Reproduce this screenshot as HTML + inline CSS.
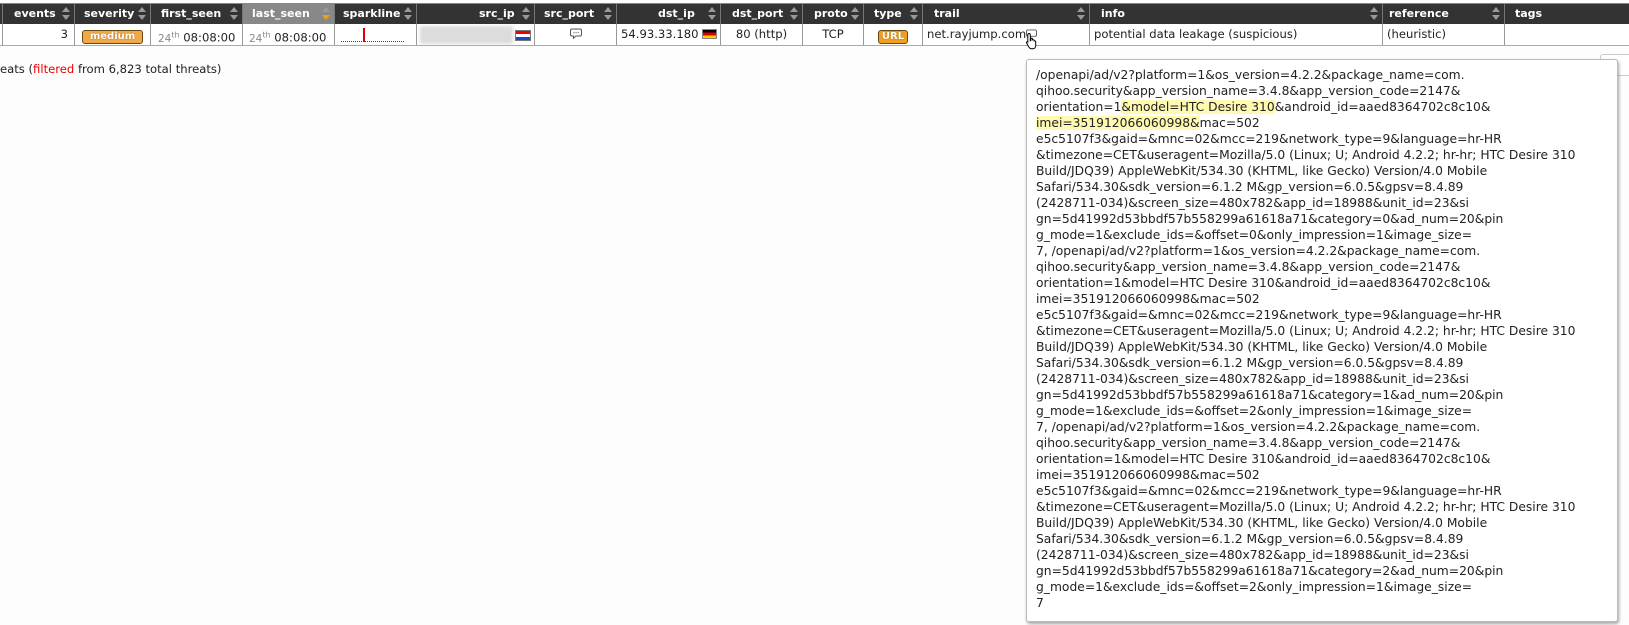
<!DOCTYPE html>
<html><head><meta charset="utf-8"><style>
*{box-sizing:border-box}
body{margin:0;width:1629px;height:625px;background:#fdfdfd;font-family:"DejaVu Sans","Liberation Sans",sans-serif;font-size:11.6px;color:#222;position:relative;overflow:hidden}
.hdr{position:absolute;top:3px;left:0;height:21px;width:1629px;background:#333;border-top:1px solid #888}
.row{position:absolute;top:24px;left:0;height:22px;width:1629px;background:#fff;border-bottom:1px solid #aaa}
.c{position:absolute;top:0;height:100%;border-right:1px solid #999;white-space:nowrap;line-height:20px;overflow:hidden}
.row .c{line-height:21px}
.hdr .c{color:#fff;font-weight:bold;font-size:11px;border-right:1px solid #777}
.ar{position:absolute;right:4px;top:3px;width:8px;height:14px}
.ar:before{content:"";position:absolute;left:0;top:0;border-left:4px solid transparent;border-right:4px solid transparent;border-bottom:5px solid #999}
.ar:after{content:"";position:absolute;left:0;top:8px;border-left:4px solid transparent;border-right:4px solid transparent;border-top:5px solid #999}
.ar.y:after{border-top-color:#e8a800}
.badge{display:inline-block;background:#f0a848;border:1px solid #6b4a10;border-radius:3px;color:#fff;font-size:10px;line-height:12px;padding:0 7px;font-weight:bold;text-shadow:0 0 1px #704000}
.day{color:#888;font-size:10.5px}
.tip{position:absolute;left:1026px;top:59px;width:592px;height:563px;background:#fff;border:1px solid #bbb;border-radius:3px;box-shadow:1px 2px 3px rgba(0,0,0,.35);padding:7px 9px;font-size:12.3px;line-height:16px;color:#222}
.tip div{white-space:nowrap;height:16px}
.hl{background:#fffab0}
</style></head><body>
<div class="hdr">
<div class="c" style="left:0;width:3px"></div>
<div class="c" style="left:3px;width:72px;padding-left:11px">events<span class="ar"></span></div>
<div class="c" style="left:75px;width:76px;padding-left:9px">severity<span class="ar"></span></div>
<div class="c" style="left:151px;width:92px;padding-left:10px">first_seen<span class="ar"></span></div>
<div class="c" style="left:243px;width:92px;padding-left:9px;background:#888">last_seen<span class="ar y"></span></div>
<div class="c" style="left:335px;width:82px;padding-left:8px">sparkline<span class="ar"></span></div>
<div class="c" style="left:417px;width:118px;padding-left:62px">src_ip<span class="ar"></span></div>
<div class="c" style="left:535px;width:82px;padding-left:9px">src_port<span class="ar"></span></div>
<div class="c" style="left:617px;width:104px;padding-left:41px">dst_ip<span class="ar"></span></div>
<div class="c" style="left:721px;width:82px;padding-left:11px">dst_port<span class="ar"></span></div>
<div class="c" style="left:803px;width:61px;padding-left:11px">proto<span class="ar"></span></div>
<div class="c" style="left:864px;width:59px;padding-left:10px">type<span class="ar"></span></div>
<div class="c" style="left:923px;width:167px;padding-left:11px">trail<span class="ar"></span></div>
<div class="c" style="left:1090px;width:293px;padding-left:11px">info<span class="ar"></span></div>
<div class="c" style="left:1383px;width:122px;padding-left:6px">reference<span class="ar"></span></div>
<div class="c" style="left:1505px;width:124px;padding-left:10px;border-right:none">tags</div>
</div>
<div class="row">
<div class="c" style="left:0;width:3px"></div>
<div class="c" style="left:3px;width:72px;text-align:right;padding-right:6px">3</div>
<div class="c" style="left:75px;width:76px;text-align:center;padding-top:1px"><span class="badge">medium</span></div>
<div class="c" style="left:151px;width:92px;padding-left:7px"><span class="day">24<sup style="font-size:8px">th</sup></span> 08:08:00</div>
<div class="c" style="left:243px;width:92px;padding-left:6px"><span class="day">24<sup style="font-size:8px">th</sup></span> 08:08:00</div>
<div class="c" style="left:335px;width:82px"><div style="position:absolute;left:6px;top:17px;width:63px;border-top:1px dotted #d00"></div><div style="position:absolute;left:28px;top:4px;width:2px;height:14px;background:#d00"></div></div>
<div class="c" style="left:417px;width:118px"><div style="position:absolute;left:3px;top:2px;width:93px;height:18px;background:#dcdcdc;filter:blur(1.5px)"></div><div style="position:absolute;left:98px;top:6px;width:16px;height:11px;background:linear-gradient(#e00 0 33%,#fff 33% 66%,#24c 66%);border:1px solid #777"></div></div>
<div class="c" style="left:535px;width:82px;text-align:center"><svg width="12" height="11" viewBox="0 0 12 11" style="vertical-align:-1px"><path d="M2 1h8a1.5 1.5 0 0 1 1.5 1.5v4A1.5 1.5 0 0 1 10 8H6l-2.5 2.2V8H2A1.5 1.5 0 0 1 .5 6.5v-4A1.5 1.5 0 0 1 2 1z" fill="#fff" stroke="#555"/><path d="M3.5 4.6h1M5.6 4.6h1M7.7 4.6h1" stroke="#555"/></svg></div>
<div class="c" style="left:617px;width:104px;padding-left:4px">54.93.33.180 <span style="display:inline-block;width:15px;height:10px;vertical-align:-1px;background:linear-gradient(#000 0 33%,#d00 33% 66%,#fc0 66%);border:1px solid #888"></span></div>
<div class="c" style="left:721px;width:82px;text-align:center">80 (http)</div>
<div class="c" style="left:803px;width:61px;text-align:center">TCP</div>
<div class="c" style="left:864px;width:59px;text-align:center;padding-top:1px"><span class="badge" style="padding:0 3px;background:#f0a020">URL</span></div>
<div class="c" style="left:923px;width:167px;padding-left:4px;overflow:visible">net.rayjump.com<svg width="11" height="10" viewBox="0 0 12 11" style="vertical-align:-1px"><path d="M2 1h8a1.5 1.5 0 0 1 1.5 1.5v4A1.5 1.5 0 0 1 10 8H6l-2.5 2.2V8H2A1.5 1.5 0 0 1 .5 6.5v-4A1.5 1.5 0 0 1 2 1z" fill="#fff" stroke="#555"/></svg><svg width="16" height="18" viewBox="0 0 16 18" style="position:absolute;left:102px;top:8px"><path d="M4 1.5c.8 0 1.3.6 1.3 1.3v6l.6-.3V6.8c0-.7 1.3-.9 1.6 0v1.5c.2-.8 1.4-.8 1.6 0v1c.3-.7 1.5-.6 1.6.2v4.2c0 1.8-1.3 3-3 3H6.3c-1.1 0-1.8-.7-2.4-1.6L1.6 11c-.5-.8.5-1.7 1.2-1L2.8 10V2.8c0-.7.5-1.3 1.2-1.3z" fill="#fff" stroke="#000"/></svg></div>
<div class="c" style="left:1090px;width:293px;padding-left:4px">potential data leakage (suspicious)</div>
<div class="c" style="left:1383px;width:122px;padding-left:4px">(heuristic)</div>
<div class="c" style="left:1505px;width:124px;border-right:none"></div>
</div>
<div style="position:absolute;left:0;top:62px;white-space:nowrap">eats (<span style="color:#e00">filtered</span> from 6,823 total threats)</div>
<div style="position:absolute;left:1600px;top:54px;width:40px;height:22px;border:1px solid #ccc;border-radius:3px;background:#fff"></div>
<div class="tip">
<div>/openapi/ad/v2?platform=1&amp;os_version=4.2.2&amp;package_name=com.</div>
<div>qihoo.security&amp;app_version_name=3.4.8&amp;app_version_code=2147&amp;</div>
<div>orientation=1<span class="hl">&amp;model=HTC Desire 310</span>&amp;android_id=aaed8364702c8c10&amp;</div>
<div><span class="hl">imei=351912066060998&amp;</span>mac=502</div>
<div>e5c5107f3&amp;gaid=&amp;mnc=02&amp;mcc=219&amp;network_type=9&amp;language=hr-HR</div>
<div>&amp;timezone=CET&amp;useragent=Mozilla/5.0 (Linux; U; Android 4.2.2; hr-hr; HTC Desire 310</div>
<div>Build/JDQ39) AppleWebKit/534.30 (KHTML, like Gecko) Version/4.0 Mobile</div>
<div>Safari/534.30&amp;sdk_version=6.1.2 M&amp;gp_version=6.0.5&amp;gpsv=8.4.89</div>
<div>(2428711-034)&amp;screen_size=480x782&amp;app_id=18988&amp;unit_id=23&amp;si</div>
<div>gn=5d41992d53bbdf57b558299a61618a71&amp;category=0&amp;ad_num=20&amp;pin</div>
<div>g_mode=1&amp;exclude_ids=&amp;offset=0&amp;only_impression=1&amp;image_size=</div>
<div>7, /openapi/ad/v2?platform=1&amp;os_version=4.2.2&amp;package_name=com.</div>
<div>qihoo.security&amp;app_version_name=3.4.8&amp;app_version_code=2147&amp;</div>
<div>orientation=1&amp;model=HTC Desire 310&amp;android_id=aaed8364702c8c10&amp;</div>
<div>imei=351912066060998&amp;mac=502</div>
<div>e5c5107f3&amp;gaid=&amp;mnc=02&amp;mcc=219&amp;network_type=9&amp;language=hr-HR</div>
<div>&amp;timezone=CET&amp;useragent=Mozilla/5.0 (Linux; U; Android 4.2.2; hr-hr; HTC Desire 310</div>
<div>Build/JDQ39) AppleWebKit/534.30 (KHTML, like Gecko) Version/4.0 Mobile</div>
<div>Safari/534.30&amp;sdk_version=6.1.2 M&amp;gp_version=6.0.5&amp;gpsv=8.4.89</div>
<div>(2428711-034)&amp;screen_size=480x782&amp;app_id=18988&amp;unit_id=23&amp;si</div>
<div>gn=5d41992d53bbdf57b558299a61618a71&amp;category=1&amp;ad_num=20&amp;pin</div>
<div>g_mode=1&amp;exclude_ids=&amp;offset=2&amp;only_impression=1&amp;image_size=</div>
<div>7, /openapi/ad/v2?platform=1&amp;os_version=4.2.2&amp;package_name=com.</div>
<div>qihoo.security&amp;app_version_name=3.4.8&amp;app_version_code=2147&amp;</div>
<div>orientation=1&amp;model=HTC Desire 310&amp;android_id=aaed8364702c8c10&amp;</div>
<div>imei=351912066060998&amp;mac=502</div>
<div>e5c5107f3&amp;gaid=&amp;mnc=02&amp;mcc=219&amp;network_type=9&amp;language=hr-HR</div>
<div>&amp;timezone=CET&amp;useragent=Mozilla/5.0 (Linux; U; Android 4.2.2; hr-hr; HTC Desire 310</div>
<div>Build/JDQ39) AppleWebKit/534.30 (KHTML, like Gecko) Version/4.0 Mobile</div>
<div>Safari/534.30&amp;sdk_version=6.1.2 M&amp;gp_version=6.0.5&amp;gpsv=8.4.89</div>
<div>(2428711-034)&amp;screen_size=480x782&amp;app_id=18988&amp;unit_id=23&amp;si</div>
<div>gn=5d41992d53bbdf57b558299a61618a71&amp;category=2&amp;ad_num=20&amp;pin</div>
<div>g_mode=1&amp;exclude_ids=&amp;offset=2&amp;only_impression=1&amp;image_size=</div>
<div>7</div>
</div>
</body></html>
